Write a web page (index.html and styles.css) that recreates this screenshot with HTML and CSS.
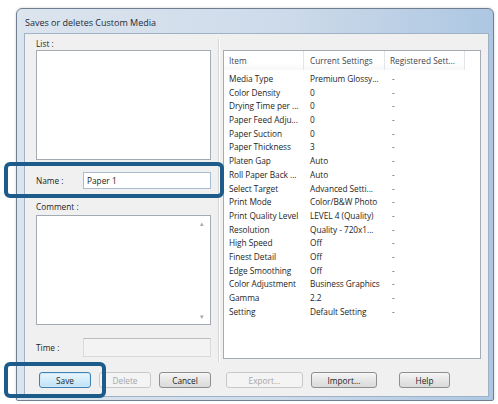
FILE: index.html
```html
<!DOCTYPE html>
<html lang="en">
<head>
  <meta charset="UTF-8"/>
  <meta name="viewport" content="width=device-width, initial-scale=1.0"/>
  <title>Saves or deletes Custom Media</title>
  <link rel="stylesheet" href="styles.css">
</head>
<body>

  <!-- Dialog window -->
  <div class="window">
    <div class="titlebar">Saves or deletes Custom Media</div>

    <div class="client">

      <!-- Left side: saved media + entry fields -->
      <div class="left-col">
        <div class="label">List :</div>
        <div class="media-list"></div>

        <div class="field-row name-row">
          <span class="field-label">Name :</span>
          <input type="text" class="text-field" value="Paper 1" />
        </div>

        <div class="label comment-label">Comment :</div>
        <div class="comment-box">
          <div class="comment-text"></div>
          <div class="scroll">
            <span>&#9652;</span>
            <span>&#9662;</span>
          </div>
        </div>

        <div class="field-row time-row">
          <span class="field-label">Time :</span>
          <div class="time-field"></div>
        </div>

        <div class="btn-row left-btns">
          <button class="btn default">Save</button>
          <button class="btn" disabled>Delete</button>
          <button class="btn">Cancel</button>
        </div>
      </div>

      <div class="divider"></div>

      <!-- Right side: settings list -->
      <div class="right-col">
        <div class="settings-view">
          <div class="settings-head">
            <div>Item</div>
            <div>Current Settings</div>
            <div>Registered Sett...</div>
          </div>
          <div class="settings-body" id="settingsBody"></div>
        </div>

        <div class="btn-row right-btns">
          <button class="btn export-btn" disabled>Export...</button>
          <button class="btn import-btn">Import...</button>
          <button class="btn help-btn">Help</button>
        </div>
      </div>
    </div>

    <!-- Callout frames -->
    <div class="callout callout-name"></div>
    <div class="callout callout-save"></div>
  </div>

  <script>
    const settings = [
      ["Media Type", "Premium Glossy..."],
      ["Color Density", "0"],
      ["Drying Time per ...", "0"],
      ["Paper Feed Adju...", "0"],
      ["Paper Suction", "0"],
      ["Paper Thickness", "3"],
      ["Platen Gap", "Auto"],
      ["Roll Paper Back ...", "Auto"],
      ["Select Target", "Advanced Setti..."],
      ["Print Mode", "Color/B&W Photo"],
      ["Print Quality Level", "LEVEL 4 (Quality)"],
      ["Resolution", "Quality - 720x1..."],
      ["High Speed", "Off"],
      ["Finest Detail", "Off"],
      ["Edge Smoothing", "Off"],
      ["Color Adjustment", "Business Graphics"],
      ["Gamma", "2.2"],
      ["Setting", "Default Setting"]
    ];

    const body = document.getElementById("settingsBody");

    settings.forEach(([item, current]) => {
      const row = document.createElement("div");
      row.className = "settings-row";
      [item, current, "-"].forEach(text => {
        const cell = document.createElement("div");
        cell.textContent = text;
        row.appendChild(cell);
      });
      body.appendChild(row);
    });
  </script>
</body>
</html>
```

FILE: styles.css
```css
* {
  margin: 0;
  padding: 0;
  box-sizing: border-box;
  font-family: 'Open Sans', 'Noto Sans', sans-serif;
}

body {
  background: #fff;
  color: #1e1e1e;
  font-size: 8.3px;
}

/* window frame */
.window {
  position: relative;
  margin: 8px 0 0 16px;
  width: 478px;
  height: 393px;
  border: 1px solid #6f7f90;
  border-radius: 6px 6px 2px 2px;
  background: linear-gradient(90deg, #dce5ee 0%, #cedbea 55%, #adc7e2 100%);
  padding: 0 4px 3px 7px;
  display: flex;
  flex-direction: column;
  box-shadow: 0 0 3px rgba(0, 0, 0, 0.18);
}

.titlebar {
  height: 24px;
  padding: 4px 0 0 1px;
  line-height: 20px;
  font-size: 9px;
  color: #1f2a36;
}

.client {
  flex: 1;
  display: flex;
  background: #f0f0f0;
  border: 1px solid #9fb2c7;
  padding: 3px 0 0 11px;
}

/* left column */
.left-col {
  width: 176px;
  display: flex;
  flex-direction: column;
}

.label {
  height: 13px;
  line-height: 13px;
}

.media-list {
  height: 110px;
  width: 175px;
  background: #fff;
  border: 1px solid #a5abb2;
}

.field-row {
  display: flex;
  align-items: center;
}

.field-label {
  width: 47px;
}

.name-row {
  margin-top: 12px;
  height: 17px;
}

.text-field {
  width: 128px;
  height: 17px;
  border: 1px solid #a9bdd2;
  background: #fff;
  padding-left: 3px;
  font-size: 8.3px;
  color: #1e1e1e;
  outline: none;
}

.comment-label {
  margin-top: 11px;
  margin-bottom: 2px;
}

.comment-box {
  height: 110px;
  width: 175px;
  display: flex;
  background: #fff;
  border: 1px solid #a5abb2;
}

.comment-text {
  flex: 1;
}

.scroll {
  width: 16px;
  display: flex;
  flex-direction: column;
  justify-content: space-between;
  align-items: center;
  padding: 4px 0 3px;
  color: #a8a8a8;
  font-size: 7px;
  line-height: 8px;
}

.time-row {
  margin-top: 13px;
  height: 19px;
}

.time-field {
  width: 128px;
  height: 19px;
  background: #f3f3f3;
  border: 1px solid #dadada;
  border-top-color: #bcbcbc;
}

/* buttons */
.btn-row {
  display: flex;
  height: 16px;
}

.left-btns {
  margin-top: 15px;
  justify-content: flex-end;
  gap: 8px;
  padding-right: 1px;
}

.btn {
  width: 52px;
  height: 16px;
  border: 1px solid #8e8f8f;
  border-radius: 3px;
  background: linear-gradient(#f6f6f6, #e6e6e6 50%, #dadada);
  font-size: 8.3px;
  color: #1e1e1e;
}

.btn.default {
  border-color: #3f80b3;
  background: linear-gradient(#eaf6fd, #d4ecfb 50%, #bfe1f6);
  box-shadow: inset 0 0 0 1px #cde9fa;
}

.btn:disabled {
  border-color: #c6c8ca;
  background: #f4f4f4;
  color: #a6a6a6;
}

/* splitter between the two columns */
.divider {
  width: 1px;
  margin: 2px 0 34px 6px;
  background: #d6d6d6;
  box-shadow: 1px 0 0 #fff;
}

/* right column */
.right-col {
  margin-left: 4px;
  width: 258px;
  padding-top: 13px;
  display: flex;
  flex-direction: column;
}

.settings-view {
  height: 309px;
  background: #fff;
  border: 1px solid #a5abb2;
}

.settings-head,
.settings-row {
  display: grid;
  grid-template-columns: 80px 81px 80px;
}

.settings-head {
  height: 19px;
  line-height: 19px;
  color: #3c4652;
}

.settings-head div {
  border-right: 1px solid #e2e5e9;
  padding-left: 5px;
  background: linear-gradient(#fff, #fff 60%, #f7f8f9);
}

.settings-head div:nth-child(2) {
  padding-left: 6px;
}

.settings-body {
  padding-top: 2px;
}

.settings-row {
  height: 13.7px;
  line-height: 13.7px;
  white-space: nowrap;
}

.settings-row div {
  padding-left: 5px;
  letter-spacing: -0.05px;
}

.settings-row div:nth-child(2) {
  padding-left: 6px;
}

.settings-row div:nth-child(3) {
  padding-left: 7px;
  color: #555;
}

.right-btns {
  margin-top: 13px;
}

.export-btn {
  margin-left: 3px;
  width: 77px;
}

.import-btn {
  margin-left: 8px;
  width: 66px;
}

.help-btn {
  margin-left: 22px;
  width: 51px;
}

/* dark blue callout frames */
.callout {
  position: absolute;
  border: 4px solid #1d5b8b;
  border-radius: 6px;
}

.callout-name {
  left: -13px;
  top: 153px;
  width: 220px;
  height: 36px;
}

.callout-save {
  left: -13px;
  top: 353px;
  width: 102px;
  height: 36px;
}
```
